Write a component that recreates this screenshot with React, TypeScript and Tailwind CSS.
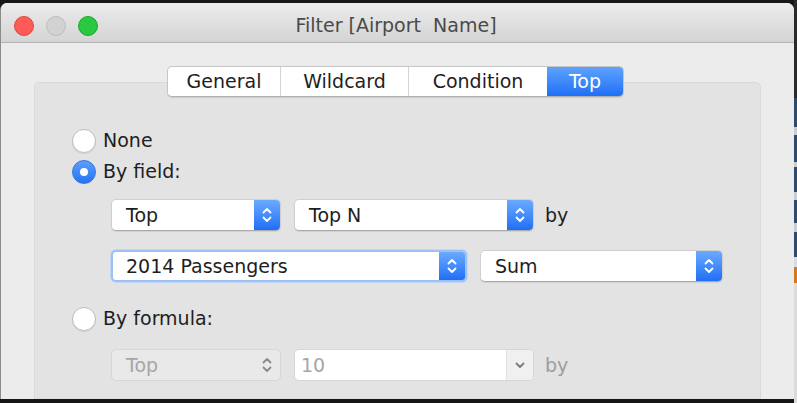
import React from "react";

const font = { fontFamily: '"DejaVu Sans", "Liberation Sans", sans-serif' };

function Stepper({ disabled }: { disabled?: boolean }) {
  const c = disabled ? "#8a8a8a" : "#ffffff";
  return (
    <svg width="12" height="20" viewBox="0 0 12 20">
      <path d="M2.5 7.5 L6 4 L9.5 7.5" fill="none" stroke={c} strokeWidth="1.8" strokeLinecap="round" strokeLinejoin="round" />
      <path d="M2.5 12.5 L6 16 L9.5 12.5" fill="none" stroke={c} strokeWidth="1.8" strokeLinecap="round" strokeLinejoin="round" />
    </svg>
  );
}

function Select({ w, label, focus }: { w: string; label: string; focus?: boolean }) {
  return (
    <div
      className={`${w} h-[32px] flex rounded-[5px] bg-white overflow-hidden ${
        focus
          ? "border-2 border-[#9cc1f2] shadow-[0_0_0_1px_#c3d8f5]"
          : "border border-[#cfcfcf] border-b-[#a9a9a9] shadow-[0_1px_1px_rgba(0,0,0,0.08)]"
      }`}
    >
      <div className={`flex-1 flex items-center ${focus ? "pl-[13px]" : "pl-[14px]"} text-[19px] text-[#1e1e1e]`}>{label}</div>
      <div className="w-[26px] flex items-center justify-center bg-gradient-to-b from-[#6aaafe] to-[#1f6ef6]">
        <Stepper />
      </div>
    </div>
  );
}

function Radio({ checked }: { checked?: boolean }) {
  if (checked)
    return (
      <div className="w-[24px] h-[24px] rounded-full bg-gradient-to-b from-[#5c9efc] to-[#2574f4] border border-[#2f74e6] flex items-center justify-center">
        <div className="w-[8px] h-[8px] rounded-full bg-white" />
      </div>
    );
  return <div className="w-[24px] h-[24px] rounded-full bg-white border border-[#bdbdbd] shadow-[0_1px_1px_rgba(0,0,0,0.08)]" />;
}

export default function App() {
  const tabs = [
    { t: "General", w: "w-[112px]" },
    { t: "Wildcard", w: "w-[128px]" },
    { t: "Condition", w: "w-[139px]" },
  ];
  return (
    <div className="w-[797px] h-[403px] bg-[#161616] flex overflow-hidden" style={font}>
      <div className="w-[794px] flex flex-col pt-[3px] pb-[4px]">
        <div className="flex-1 flex flex-col rounded-t-[7px] overflow-hidden border-l border-[#8c8c8c] bg-[#ececec]">
          {/* title bar */}
          <div className="h-[40px] flex items-center bg-gradient-to-b from-[#ececec] to-[#d4d4d4] border-b border-[#b3b3b3] relative">
            <div className="flex items-center gap-[12px] pl-[13px] pt-[6px]">
              <div className="w-[20px] h-[20px] rounded-full bg-[#fc5b57] border border-[#e0443e]" />
              <div className="w-[20px] h-[20px] rounded-full bg-[#d2d2d2] border border-[#bdbdbd]" />
              <div className="w-[20px] h-[20px] rounded-full bg-[#2ac840] border border-[#1ca72d]" />
            </div>
            <div className="flex-1 text-center whitespace-pre text-[19px] text-[#4a4a4a] pt-[5px] pr-[100px]">Filter [Airport  Name]</div>
          </div>
          {/* content */}
          <div className="flex-1 flex flex-col pt-[23px] px-[33px]">
            <div className="flex justify-center relative z-10 pr-[4px]">
              <div className="flex h-[31px] rounded-[5px] border border-[#c6c6c6] border-b-[#b0b0b0] bg-white shadow-[0_1px_1px_rgba(0,0,0,0.1)] overflow-hidden text-[19px] text-[#1e1e1e]">
                {tabs.map((x, i) => (
                  <div key={x.t} className={`${x.w} flex items-center justify-center ${i > 0 ? "border-l border-[#d4d4d4]" : ""}`}>
                    {x.t}
                  </div>
                ))}
                <div className="w-[76px] flex items-center justify-center bg-gradient-to-b from-[#5ea2fd] to-[#1d6ff6] text-white">Top</div>
              </div>
            </div>
            <div className="flex-1 -mt-[15px] bg-[#e3e3e3] border border-[#d9d9d9] rounded-t-[5px] flex flex-col pt-[42px] pl-[37px] text-[19px] text-[#1e1e1e]">
              <div className="h-[31px] flex items-center gap-[7px]">
                <Radio />
                <span>None</span>
              </div>
              <div className="h-[31px] flex items-center gap-[7px]">
                <Radio checked />
                <span>By field:</span>
              </div>
              <div className="mt-[12px] pl-[39px] flex items-center">
                <Select w="w-[170px]" label="Top" />
                <div className="w-[13px]" />
                <Select w="w-[240px]" label="Top N" />
                <span className="ml-[11px]">by</span>
              </div>
              <div className="mt-[19px] pl-[39px] flex items-center">
                <Select w="w-[356px]" label="2014 Passengers" focus />
                <div className="w-[13px]" />
                <Select w="w-[243px]" label="Sum" />
              </div>
              <div className="mt-[21px] h-[31px] flex items-center gap-[7px]">
                <Radio />
                <span>By formula:</span>
              </div>
              <div className="mt-[15px] pl-[39px] flex items-center text-[#a6a6a6]">
                <div className="w-[170px] h-[32px] flex rounded-[5px] bg-[#e9e9e9] border border-[#d6d6d6]">
                  <div className="flex-1 flex items-center pl-[14px]">Top</div>
                  <div className="w-[26px] flex items-center justify-center">
                    <Stepper disabled />
                  </div>
                </div>
                <div className="w-[13px]" />
                <div className="w-[240px] h-[32px] flex rounded-[5px] bg-white border border-[#d6d6d6] overflow-hidden">
                  <div className="flex-1 flex items-center pl-[6px]">10</div>
                  <div className="w-[27px] flex items-center justify-center bg-[#f0f0f0] border-l border-[#e2e2e2]">
                    <svg width="12" height="10" viewBox="0 0 12 10">
                      <path d="M2.5 3.5 L6 7 L9.5 3.5" fill="none" stroke="#7a7a7a" strokeWidth="1.8" strokeLinecap="round" strokeLinejoin="round" />
                    </svg>
                  </div>
                </div>
                <span className="ml-[11px] text-[#9d9d9d]">by</span>
              </div>
            </div>
          </div>
        </div>
      </div>
      {/* background sliver on the right */}
      <div className="flex-1 flex flex-col">
        <div className="h-[98px] bg-[#2a2a2a]" />
        <div className="h-[29px] bg-[#2b4a70]" />
        <div className="h-[8px] bg-[#c9ced6]" />
        <div className="h-[27px] bg-[#2b4a70]" />
        <div className="h-[5px] bg-[#c9ced6]" />
        <div className="h-[25px] bg-[#2b4a70]" />
        <div className="h-[8px] bg-[#c9ced6]" />
        <div className="h-[23px] bg-[#2b4a70]" />
        <div className="h-[9px] bg-[#c9ced6]" />
        <div className="h-[25px] bg-[#2b4a70]" />
        <div className="h-[10px] bg-[#d8dde4]" />
        <div className="h-[16px] bg-[#d67a1c]" />
        <div className="flex-1 bg-[#dcdcdc]" />
      </div>
    </div>
  );
}
